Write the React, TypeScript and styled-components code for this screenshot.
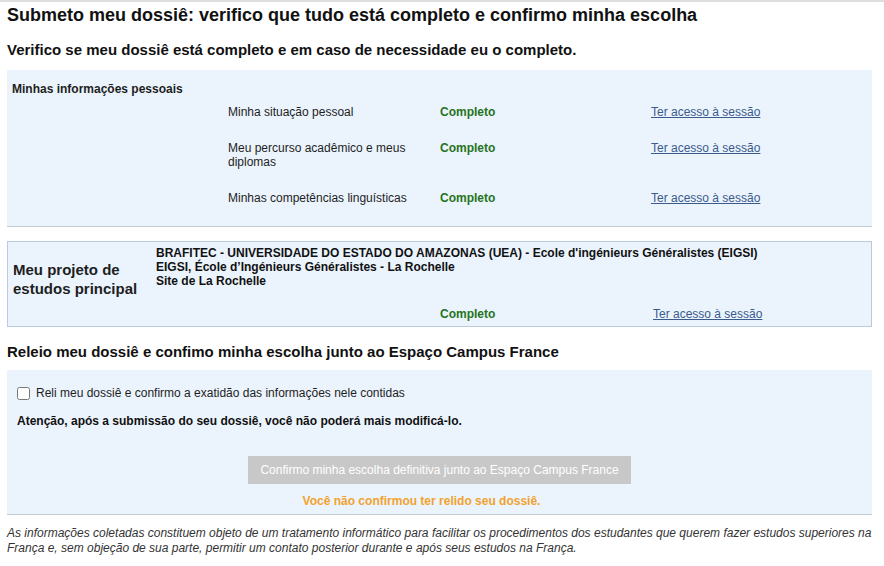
import React from "react";
import styled, { createGlobalStyle } from "styled-components";

const GlobalStyle = createGlobalStyle`
  body {
    margin: 0;
    background: #ffffff;
    font-family: "Liberation Sans", Arial, sans-serif;
    color: #1e1e1e;
  }
`;

const Page = styled.div`
  border-top: 2px solid #dedede;
  padding: 0 12px 0 7px;
`;

const Title = styled.h1`
  margin: 0;
  padding-top: 2px;
  font-size: 18px;
  line-height: 22px;
  font-weight: bold;
  color: #111;
`;

const Heading = styled.h2<{ $top: number; $bottom: number }>`
  margin: ${(p) => p.$top}px 0 ${(p) => p.$bottom}px;
  font-size: 15px;
  line-height: 18px;
  font-weight: bold;
  color: #111;
`;

const Panel = styled.div`
  background: #ebf4fd;
  border-bottom: 1px solid #c3ccd6;
`;

const InfoGrid = styled(Panel)`
  display: grid;
  grid-template-columns: 216px 212px 211px 1fr;
  row-gap: 22px;
  padding: 12px 0 21px 5px;
  font-size: 12px;
  line-height: 14px;
  & > b {
    grid-column: 1 / -1;
    margin-bottom: -13px;
  }
`;

const Cell = styled.div<{ $col: number }>`
  grid-column: ${(p) => p.$col};
  padding-right: 12px;
`;

const Status = styled.span<{ $col: number }>`
  grid-column: ${(p) => p.$col};
  color: #267321;
  font-weight: bold;
`;

const Access = styled.a<{ $col: number }>`
  grid-column: ${(p) => p.$col};
  justify-self: start;
  color: #3a5a8c;
  text-decoration: underline;
  cursor: pointer;
`;

const ProjectBox = styled.div`
  display: grid;
  grid-template-columns: 143px 284px 213px 1fr;
  grid-template-rows: auto 14px;
  row-gap: 19px;
  margin-top: 14px;
  padding: 4px 0 5px 5px;
  background: #ebf4fd;
  border: 1px solid #bccadb;
  font-size: 12px;
  line-height: 14px;
`;

const ProjectTitle = styled.div`
  grid-row: 1 / span 2;
  align-self: center;
  margin-bottom: 9px;
  font-size: 15px;
  line-height: 19px;
  font-weight: bold;
`;

const ProjectText = styled.div`
  grid-column: 2 / -1;
  font-weight: bold;
  color: #111;
`;

const ConfirmPanel = styled(Panel)`
  display: flex;
  flex-direction: column;
  padding: 16px 10px 6px;
  font-size: 12px;
  line-height: 14px;
`;

const CheckRow = styled.label`
  display: flex;
  align-items: center;
  gap: 6px;
  cursor: pointer;
  input {
    margin: 0;
    width: 13px;
    height: 13px;
  }
`;

const Warning = styled.p`
  margin: 14px 0 0;
  font-weight: bold;
  color: #111;
`;

const ConfirmButton = styled.button`
  align-self: center;
  margin-top: 28px;
  height: 28px;
  padding: 0 12px;
  border: none;
  background: #c8c8c8;
  color: #ffffff;
  font-family: "Liberation Sans", Arial, sans-serif;
  font-size: 12px;
`;

const Notice = styled.p`
  margin: 10px 0 0;
  padding-right: 36px;
  text-align: center;
  color: #f2a22e;
  font-weight: bold;
`;

const Footnote = styled.p`
  margin: 11px 0 0;
  font-size: 12px;
  line-height: 15px;
  font-style: italic;
  color: #333;
`;

const rows = [
  "Minha situação pessoal",
  "Meu percurso acadêmico e meus diplomas",
  "Minhas competências linguísticas",
];

export default function App() {
  return (
    <Page>
      <GlobalStyle />
      <Title>Submeto meu dossiê: verifico que tudo está completo e confirmo minha escolha</Title>
      <Heading $top={15} $bottom={11}>
        Verifico se meu dossiê está completo e em caso de necessidade eu o completo.
      </Heading>

      <InfoGrid>
        <b>Minhas informações pessoais</b>
        {rows.map((label) => (
          <React.Fragment key={label}>
            <Cell $col={2}>{label}</Cell>
            <Status $col={3}>Completo</Status>
            <Access $col={4}>Ter acesso à sessão</Access>
          </React.Fragment>
        ))}
      </InfoGrid>

      <ProjectBox>
        <ProjectTitle>
          Meu projeto de
          <br />
          estudos principal
        </ProjectTitle>
        <ProjectText>
          BRAFITEC - UNIVERSIDADE DO ESTADO DO AMAZONAS (UEA) - Ecole d'ingénieurs Généralistes (EIGSI)
          <br />
          EIGSI, École d’Ingénieurs Généralistes - La Rochelle
          <br />
          Site de La Rochelle
        </ProjectText>
        <Status $col={3}>Completo</Status>
        <Access $col={4}>Ter acesso à sessão</Access>
      </ProjectBox>

      <Heading $top={16} $bottom={9}>
        Releio meu dossiê e confimo minha escolha junto ao Espaço Campus France
      </Heading>

      <ConfirmPanel>
        <CheckRow>
          <input type="checkbox" />
          Reli meu dossiê e confirmo a exatidão das informações nele contidas
        </CheckRow>
        <Warning>Atenção, após a submissão do seu dossiê, você não poderá mais modificá-lo.</Warning>
        <ConfirmButton disabled>Confirmo minha escolha definitiva junto ao Espaço Campus France</ConfirmButton>
        <Notice>Você não confirmou ter relido seu dossiê.</Notice>
      </ConfirmPanel>

      <Footnote>
        As informações coletadas constituem objeto de um tratamento informático para facilitar os procedimentos dos
        estudantes que querem fazer estudos superiores na França e, sem objeção de sua parte, permitir um contato
        posterior durante e após seus estudos na França.
      </Footnote>
    </Page>
  );
}
